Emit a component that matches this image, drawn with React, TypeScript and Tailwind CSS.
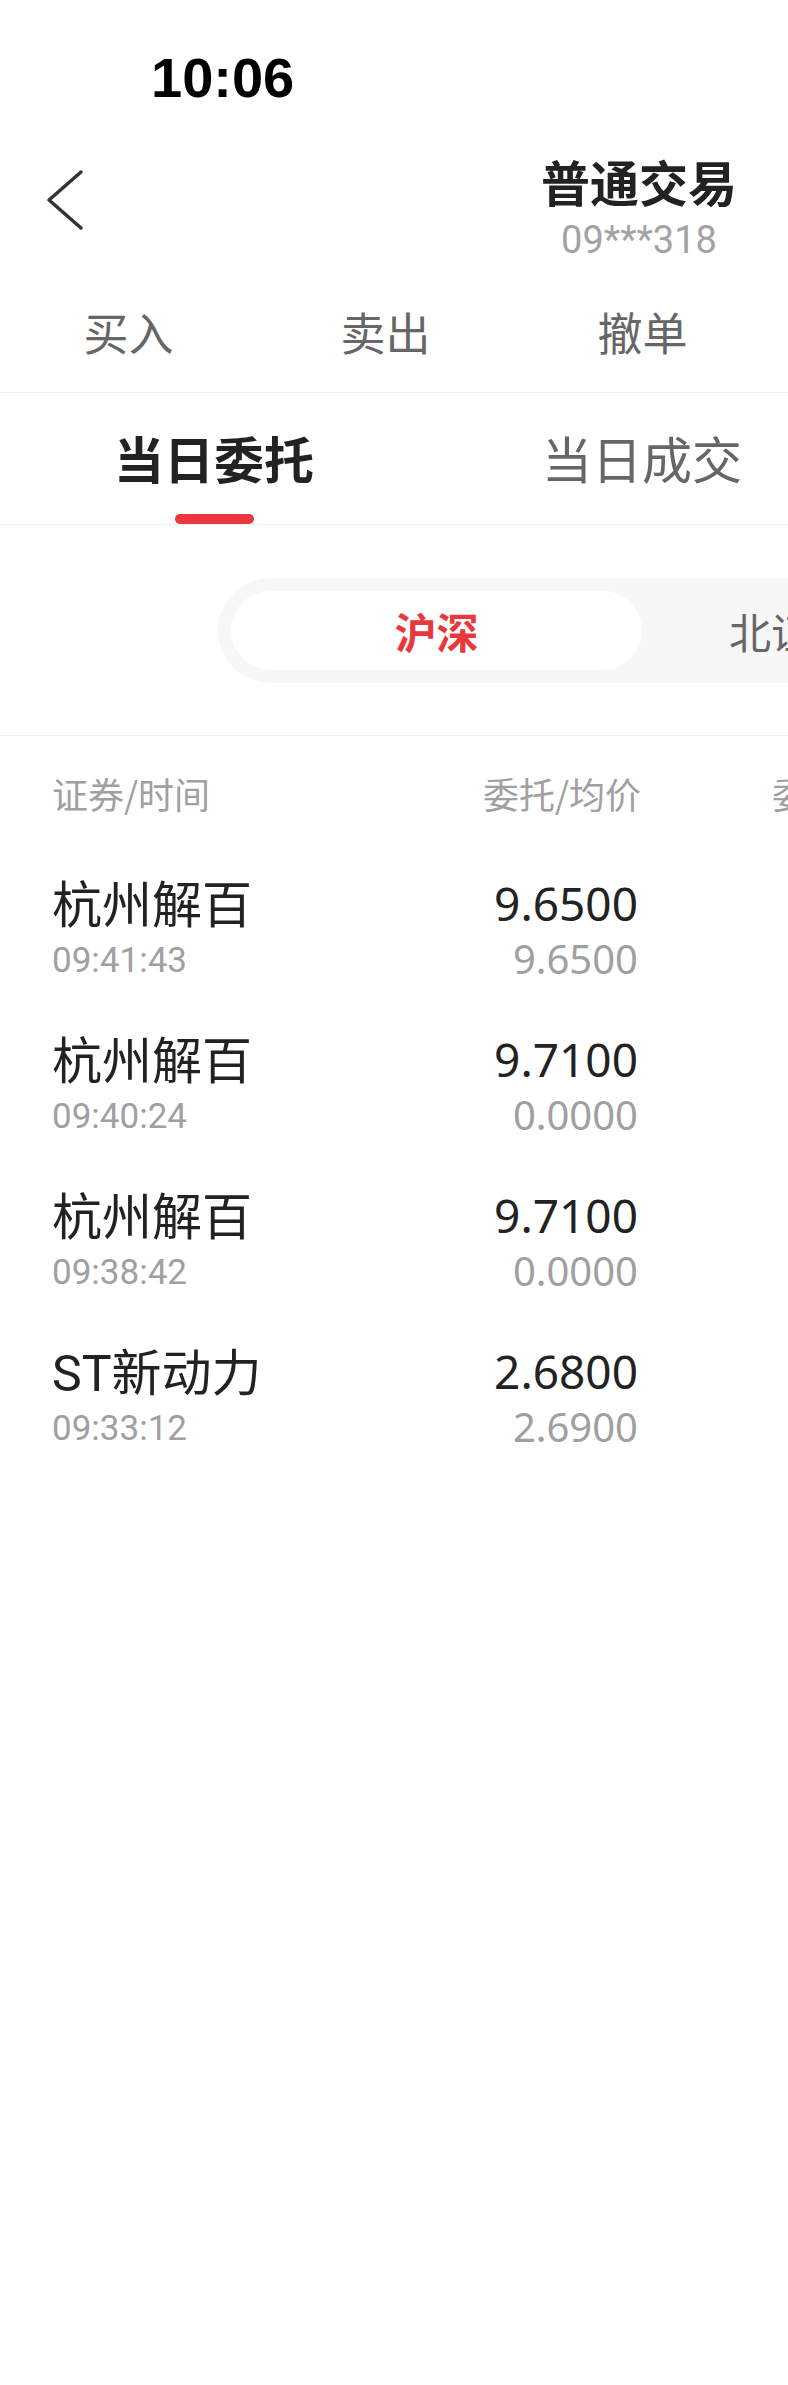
import React from "react";

const cjk = "font-['Noto_Sans_CJK_SC',sans-serif]";

type Order = { name: string; time: string; price: string; avg: string };

const orders: Order[] = [
  { name: "杭州解百", time: "09:41:43", price: "9.6500", avg: "9.6500" },
  { name: "杭州解百", time: "09:40:24", price: "9.7100", avg: "0.0000" },
  { name: "杭州解百", time: "09:38:42", price: "9.7100", avg: "0.0000" },
  { name: "ST新动力", time: "09:33:12", price: "2.6800", avg: "2.6900" },
];

function BackIcon() {
  return (
    <svg width="40" height="62" viewBox="0 0 40 62" fill="none">
      <polyline
        points="35,3 3,31 35,59"
        stroke="#333333"
        strokeWidth="3.5"
        strokeLinecap="round"
        strokeLinejoin="round"
      />
    </svg>
  );
}

function OrderRow({ order }: { order: Order }) {
  return (
    <div className="flex h-[156px] items-start pt-[30px] pl-[52px]">
      <div className="w-[389px] shrink-0">
        <div className="pt-[2px] font-['Roboto','Noto_Sans_CJK_SC',sans-serif] text-[50px] leading-[50px] text-[#222222]">
          {order.name}
        </div>
        <div className="mt-[12px] font-['Roboto',sans-serif] text-[35px] leading-[35px] text-[#a0a0a0]">
          {order.time}
        </div>
      </div>
      <div className="w-[197px] shrink-0 text-right font-['Noto_Sans',sans-serif]">
        <div className="pt-[1px] text-[46px] leading-[46px] text-[#222222]">{order.price}</div>
        <div className="mt-[13px] text-[40px] leading-[40px] text-[#a0a0a0]">{order.avg}</div>
      </div>
    </div>
  );
}

export default function App() {
  return (
    <div className={`min-h-[2385px] w-full overflow-hidden bg-white ${cjk}`}>
      {/* status bar */}
      <div className="h-[120px] pt-[50px] pl-[151px]">
        <div className="font-['Liberation_Sans',sans-serif] text-[56px] font-bold leading-[56px] text-black">
          10:06
        </div>
      </div>

      {/* nav header */}
      <div className="flex h-[150px] items-start">
        <div className="ml-[46px] mt-[49px] shrink-0">
          <BackIcon />
        </div>
        <div className="ml-[403px] flex w-[300px] shrink-0 flex-col items-center pt-[37px]">
          <div className="text-[49px] font-bold leading-[48px] text-[#222222]">普通交易</div>
          <div className="mt-[16px] font-['Roboto',sans-serif] text-[38px] leading-[38px] text-[#a3a3a3]">
            09***318
          </div>
        </div>
      </div>

      {/* trade actions */}
      <div className="grid h-[123px] grid-cols-[257px_257px_257px] items-center border-b border-[#eeeeee] text-[45px] leading-[45px] text-[#666666]">
        <div className="text-center">买入</div>
        <div className="text-center">卖出</div>
        <div className="text-center">撤单</div>
      </div>

      {/* order tabs */}
      <div className="flex h-[132px] w-[856px] border-b border-[#eeeeee]">
        <div className="flex w-[428px] shrink-0 flex-col items-center pt-[39px]">
          <div className="text-[50px] font-bold leading-[50px] text-[#222222]">当日委托</div>
          <div className="mt-[32px] h-[10px] w-[79px] rounded-full bg-[#e8383d]" />
        </div>
        <div className="flex w-[428px] shrink-0 flex-col items-center pt-[39px]">
          <div className="text-[50px] leading-[50px] text-[#666666]">当日成交</div>
        </div>
      </div>

      {/* market switch */}
      <div className="h-[211px] border-b border-[#eeeeee] pt-[53px] pl-[218px]">
        <div className="flex h-[105px] w-[700px] items-center rounded-l-full bg-[#f7f7f7] p-[13px]">
          <div className="flex h-[79px] w-[411px] shrink-0 items-center justify-center rounded-full bg-white text-[42px] font-bold leading-[42px] text-[#e8383d]">
            沪深
          </div>
          <div className="ml-[87px] shrink-0 text-[42px] leading-[42px] text-[#666666]">北证</div>
        </div>
      </div>

      {/* list header */}
      <div className="flex h-[114px] items-start pt-[39px] pl-[52px] text-[36px] leading-[36px] text-[#a0a0a0]">
        <div className="w-[389px] shrink-0">证券/时间</div>
        <div className="w-[200px] shrink-0 text-right">委托/均价</div>
        <div className="ml-[131px] shrink-0 whitespace-nowrap">委托/成交</div>
      </div>

      {/* rows */}
      <div className="-mt-[1px]">
        {orders.map((o, i) => (
          <OrderRow key={i} order={o} />
        ))}
      </div>
    </div>
  );
}
